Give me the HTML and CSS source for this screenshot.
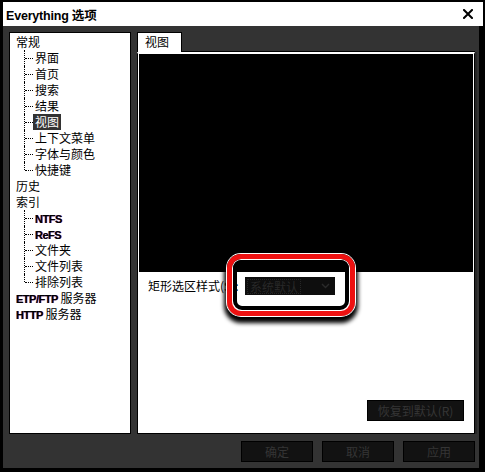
FILE: index.html
```html
<!DOCTYPE html>
<html lang="zh-CN">
<head>
<meta charset="utf-8">
<title>Everything 选项</title>
<link rel="stylesheet" href="styles.css">
</head>
<body>
<div class="window">
  <div class="titlebar">
    <span class="title">Everything 选项</span>
    <svg class="close" width="10" height="10" viewBox="0 0 10 10" aria-hidden="true">
      <path d="M1 1 L9 9 M9 1 L1 9" stroke="#000" stroke-width="2" fill="none" stroke-linecap="square"/>
    </svg>
  </div>
  <div class="client">
    <div class="main">
      <div class="tree">
        <div class="row">常规</div>
        <div class="child"><span>界面</span></div>
        <div class="child"><span>首页</span></div>
        <div class="child"><span>搜索</span></div>
        <div class="child"><span>结果</span></div>
        <div class="child sel"><span>视图</span></div>
        <div class="child"><span>上下文菜单</span></div>
        <div class="child"><span>字体与颜色</span></div>
        <div class="child last"><span>快捷键</span></div>
        <div class="row">历史</div>
        <div class="row">索引</div>
        <div class="child"><span class="b">NTFS</span></div>
        <div class="child"><span class="b">ReFS</span></div>
        <div class="child"><span>文件夹</span></div>
        <div class="child"><span>文件列表</span></div>
        <div class="child last"><span>排除列表</span></div>
        <div class="row"><span class="b">ETP/FTP</span> 服务器</div>
        <div class="row"><span class="b">HTTP</span> 服务器</div>
      </div>
      <div class="tabs">
        <div class="tabstrip"><div class="tab">视图</div></div>
        <div class="page">
          <div class="preview"></div>
          <div class="field">
            <span class="label">矩形选区样式(S):</span>
            <div class="combo">
              <span class="value">系统默认</span>
              <svg class="chev" width="9" height="6" viewBox="0 0 9 6" aria-hidden="true">
                <path d="M1 1 L4.5 4.5 L8 1" stroke="#2a2a2a" stroke-width="1.4" fill="none"/>
              </svg>
            </div>
          </div>
          <div class="page-actions"><button class="btn wide">恢复到默认(R)</button></div>
        </div>
      </div>
    </div>
    <div class="buttons">
      <button class="btn">确定</button>
      <button class="btn">取消</button>
      <button class="btn">应用</button>
    </div>
  </div>
  <div class="highlight"><div class="hl-inner"></div></div>
</div>
</body>
</html>
```
FILE: styles.css
```css
html, body {
  margin: 0;
  padding: 0;
}
body {
  background: #000;
  width: 485px;
  height: 472px;
  overflow: hidden;
  font-family: "Noto Sans CJK SC", "Liberation Sans", sans-serif;
  font-size: 12px;
  color: #000;
}
.window {
  position: relative;
  height: 472px;
  box-sizing: border-box;
  padding: 2px 2px 4px 3px;
  display: flex;
  flex-direction: column;
}
.titlebar {
  height: 24px;
  flex: none;
  background: #fff;
  display: flex;
  align-items: center;
  justify-content: space-between;
  padding: 0 10px 0 3px;
}
.title {
  font-family: "Liberation Sans", "Noto Sans CJK SC", sans-serif;
  font-weight: bold;
  font-size: 12.5px;
  letter-spacing: -0.2px;
}
.close {
  display: block;
}
.client {
  flex: 1;
  background: #333;
  margin-right: 4px;
  padding: 6px 4px 6px 6px;
  display: flex;
  flex-direction: column;
  gap: 7px;
}
.main {
  display: flex;
  gap: 6px;
  height: 402px;
  flex: none;
}
.tree {
  width: 122px;
  flex: none;
  box-sizing: border-box;
  border: 1px solid #000;
  background: #fff;
  padding-top: 1px;
}
.row {
  height: 16px;
  line-height: 16px;
  padding-left: 6px;
  white-space: nowrap;
}
.child {
  position: relative;
  height: 16px;
  line-height: 16px;
  padding-left: 23px;
  white-space: nowrap;
}
.child::before {
  content: "";
  position: absolute;
  left: 14px;
  top: 0;
  bottom: 0;
  border-left: 1px dotted #000;
}
.child.last::before {
  bottom: 8px;
}
.child::after {
  content: "";
  position: absolute;
  left: 15px;
  top: 8px;
  width: 8px;
  border-top: 1px dotted #000;
}
.child span {
  display: inline-block;
  height: 16px;
  padding: 0 2px;
}
.child.sel span {
  background: #333;
  color: #fff;
}
.b {
  font-family: "Liberation Sans", sans-serif;
  font-weight: bold;
  font-size: 11px;
  letter-spacing: -0.5px;
  text-shadow: -0.5px 0 rgba(0, 40, 255, 0.5), 0.5px 0 rgba(255, 0, 0, 0.6);
}
.child span.b {
  padding: 0 2px;
}
.tabs {
  flex: 1;
  display: flex;
  flex-direction: column;
}
.tabstrip {
  height: 20px;
  flex: none;
  display: flex;
}
.tab {
  position: relative;
  z-index: 1;
  width: 45px;
  height: 20px;
  box-sizing: border-box;
  background: #fff;
  border: 1px solid #000;
  border-bottom: 0;
  padding-left: 7px;
  line-height: 18px;
}
.page {
  flex: 1;
  display: flex;
  flex-direction: column;
  background: #fff;
  border: 1px solid #000;
  border-top: 2px solid #fff;
  box-shadow: 0 -1px 0 #000, 2px 0 0 #262626;
  padding: 0 1px 12px;
}
.preview {
  height: 218px;
  flex: none;
  background: #000;
}
.field {
  display: flex;
  align-items: center;
  margin-top: 5px;
  padding-left: 9px;
}
.label {
  width: 97px;
  flex: none;
  white-space: nowrap;
  overflow: visible;
  line-height: 18px;
}
.combo {
  width: 90px;
  height: 18px;
  box-sizing: border-box;
  background: #0e0e0e;
  display: flex;
  align-items: center;
  justify-content: space-between;
  padding: 0 5px 0 2px;
  color: #282828;
}
.value {
  border: 1px dotted #262626;
  padding: 0 2px;
  line-height: 13px;
}
.chev {
  display: block;
}
.page-actions {
  margin-top: auto;
  display: flex;
  justify-content: flex-end;
  padding-right: 9px;
}
.btn {
  width: 72px;
  height: 21px;
  padding: 0;
  margin: 0;
  background: #121212;
  border: 1px solid #000;
  color: #353535;
  font-family: "Noto Sans CJK SC", "Liberation Sans", sans-serif;
  font-size: 12px;
  line-height: 19px;
}
.btn.wide {
  width: 97px;
}
.buttons {
  display: flex;
  justify-content: flex-end;
  gap: 9px;
  height: 21px;
  flex: none;
}
.highlight {
  position: absolute;
  left: 227px;
  top: 254px;
  width: 128px;
  height: 62px;
  box-sizing: border-box;
  border: 5px solid #ee1111;
  border-radius: 14px;
  box-shadow: 0 0 0 1px #fff, inset 0 0 0 1px #fff, 0 4px 4px 3px #000;
  padding: 1px;
  pointer-events: none;
}
.hl-inner {
  height: 100%;
  box-sizing: border-box;
  border: 4px solid #000;
  border-radius: 9px;
}
```
